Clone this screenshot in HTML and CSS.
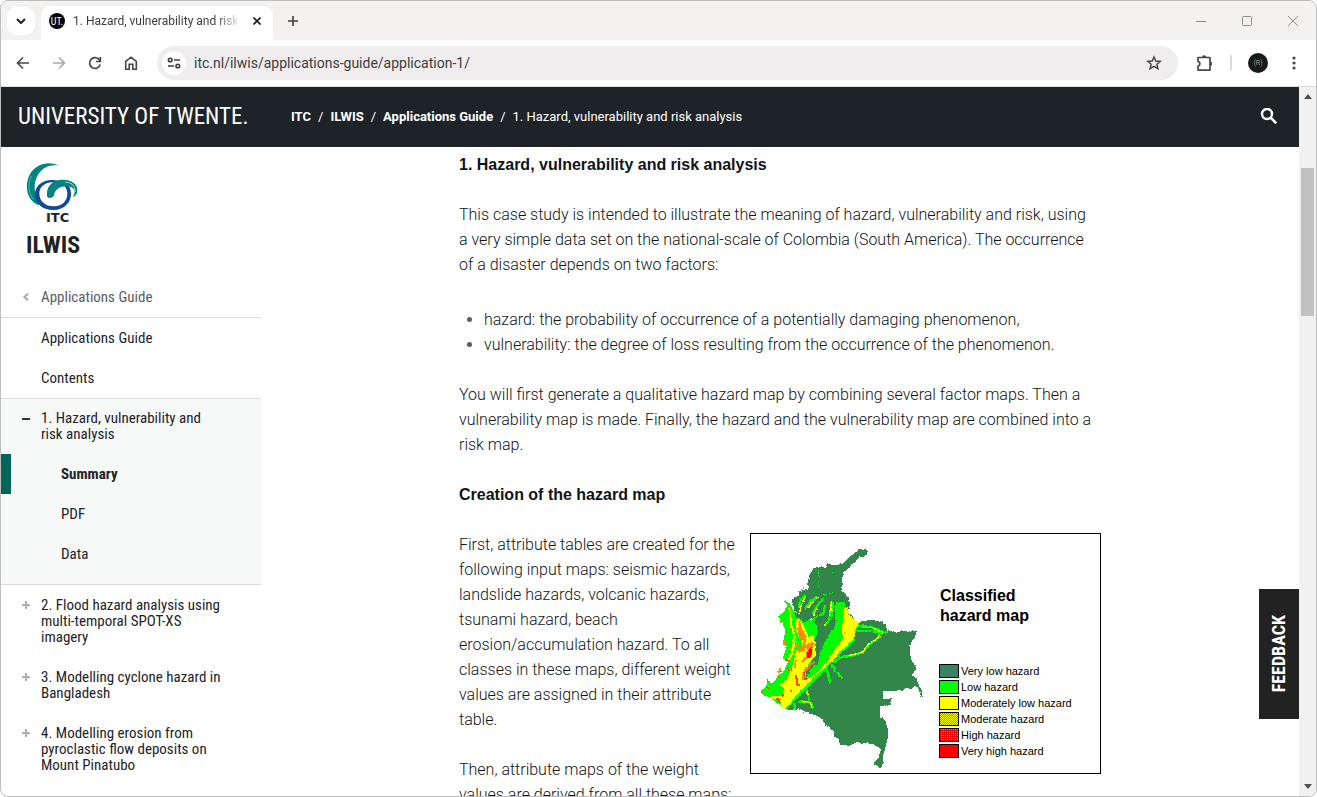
FILE: index.html
```html
<!DOCTYPE html>
<html lang="en">
<head>
<meta charset="utf-8">
<title>1. Hazard, vulnerability and risk analysis</title>
<link rel="stylesheet" href="styles.css">
</head>
<body>
<div class="window">
  <div class="tabstrip">
    <button class="tab-search" aria-label="Search tabs"><svg width="10" height="6" viewBox="0 0 10 6"><path d="M1 1l4 4 4-4" fill="none" stroke="#1f1f1f" stroke-width="2"/></svg></button>
    <div class="tab">
      <span class="favicon">UT.</span>
      <span class="tab-title">1. Hazard, vulnerability and risk</span>
      <button class="plain" aria-label="Close tab"><svg width="8" height="8" viewBox="0 0 8 8"><path d="M.5.5l7 7M7.500.5l-7 7" stroke="#1f1f1f" stroke-width="1.700"/></svg></button>
    </div>
    <button class="plain new-tab" aria-label="New tab"><svg width="10" height="10" viewBox="0 0 10 10"><path d="M5 0v10M0 5h10" stroke="#3c3c3c" stroke-width="1.600"/></svg></button>
    <div class="window-controls">
      <button class="plain" aria-label="Minimize"><svg width="10" height="10" viewBox="0 0 10 10"><path d="M0 5.500h10" stroke="#8c8c8c"/></svg></button>
      <button class="plain" aria-label="Maximize"><svg width="10" height="10" viewBox="0 0 10 10"><rect x=".5" y=".5" width="9" height="9" rx="1" fill="none" stroke="#8c8c8c"/></svg></button>
      <button class="plain" aria-label="Close"><svg width="10" height="10" viewBox="0 0 10 10"><path d="M0 0l10 10M10 0L0 10" stroke="#8c8c8c"/></svg></button>
    </div>
  </div>

  <div class="toolbar">
    <button class="plain nav" aria-label="Back"><svg width="16" height="16" viewBox="0 0 16 16"><path d="M14 8H3M8 2.500L2.500 8 8 13.500" fill="none" stroke="#474747" stroke-width="1.600"/></svg></button>
    <button class="plain nav" aria-label="Forward"><svg width="16" height="16" viewBox="0 0 16 16"><path d="M2 8h11M8 2.500L13.500 8 8 13.500" fill="none" stroke="#a8a8a8" stroke-width="1.600"/></svg></button>
    <button class="plain nav" aria-label="Reload"><svg width="16" height="16" viewBox="0 0 16 16"><path d="M13.200 9.500A5.400 5.400 0 1 1 12.300 4.700L13.300 6" fill="none" stroke="#474747" stroke-width="1.700"/><path d="M13.300 2v4.500H8.800" fill="none" stroke="#474747" stroke-width="1.700"/></svg></button>
    <button class="plain nav" aria-label="Home"><svg width="16" height="16" viewBox="0 0 16 16"><path d="M2.700 6.400L8 2.200l5.300 4.200v7.800h-3.500V9.300H6.200v4.900H2.700z" fill="none" stroke="#474747" stroke-width="1.600"/></svg></button>
    <div class="omnibox">
      <button class="site-info" aria-label="Site information"><svg width="14" height="12" viewBox="0 0 14 12"><g fill="none" stroke="#3c3c3c" stroke-width="1.600"><circle cx="3.200" cy="3" r="1.800"/><path d="M7 3h6M1 9h6"/><circle cx="10.800" cy="9" r="1.800"/></g></svg></button>
      <input class="url" aria-label="Address" value="itc.nl/ilwis/applications-guide/application-1/">
      <button class="plain" aria-label="Bookmark this page"><svg width="16" height="16" viewBox="0 0 16 16"><path d="M8 2l1.800 4 4.400.4-3.300 2.900 1 4.300L8 11.300l-3.900 2.300 1-4.300L1.800 6.400 6.200 6z" fill="none" stroke="#474747" stroke-width="1.500"/></svg></button>
    </div>
    <button class="plain" aria-label="Extensions"><svg width="18" height="18" viewBox="0 0 18 18"><path d="M2 3.500h12v12.600H2v-4a2.400 2.400 0 0 0 0-4.700z" fill="none" stroke="#474747" stroke-width="1.700" stroke-linejoin="round"/><path d="M6 3.500a2.200 2.200 0 0 1 4.400 0zM14 7.500a2.200 2.200 0 0 1 0 4.400z" fill="#474747"/></svg></button>
    <span class="divider"></span>
    <button class="avatar" aria-label="Profile">(R)</button>
    <button class="plain" aria-label="Menu"><svg width="4" height="14" viewBox="0 0 4 14"><g fill="#474747"><circle cx="2" cy="2" r="1.600"/><circle cx="2" cy="7" r="1.600"/><circle cx="2" cy="12" r="1.600"/></g></svg></button>
  </div>

  <div class="viewport">
    <div class="page">
      <header class="site-header">
        <a class="brand" href="#">UNIVERSITY OF TWENTE.</a>
        <nav class="crumbs" aria-label="Breadcrumb">
          <a href="#">ITC</a><i>/</i><a href="#">ILWIS</a><i>/</i><a href="#">Applications Guide</a><i>/</i><span>1. Hazard, vulnerability and risk analysis</span>
        </nav>
        <button class="plain" aria-label="Search"><svg width="18" height="18" viewBox="0 0 18 18"><circle cx="7" cy="6" r="5" fill="none" stroke="#fff" stroke-width="2.400"/><path d="M10.700 9.700l5.600 5.600" stroke="#fff" stroke-width="2.600"/></svg></button>
      </header>

      <div class="columns">
        <aside class="sidebar">
          <a class="logo" href="#">
            <svg width="54" height="48" viewBox="0 3 162 144" aria-hidden="true">
              <path d="M98 14C70-1 31 7 12 39C-7 74 3 119 37 132L47 123C22 105 20 68 37 40C51 18 75 9 98 14z" fill="#008582"/>
              <path d="M16 45C4 75 9 99 23 116" fill="none" stroke="#fff" stroke-width="1"/>
              <path fill="#104a9f" fill-rule="evenodd" d="M79 57C47 57 28 76 27 98C26 126 49 147 82 147C116 146 137 123 135 95C134 72 117 59 79 57zM83 64C111 64 124 79 124 99C123 121 108 136 83 136C57 136 41 120 40 99C39 78 57 63 83 64z"/>
              <path d="M64 108C58 77 80 56 111 56C136 56 155 69 154 87C154 99 148 105 140 109C154 88 141 76 122 76C101 76 86 85 83 106C76 112 69 113 64 108z" fill="#008582"/>
              <path d="M117 63C140 65 148 77 147 93" fill="none" stroke="#fff" stroke-width="2"/>
            </svg>
            <span class="logo-itc">ITC</span>
            <span class="logo-name">ILWIS</span>
          </a>
          <nav class="menu" aria-label="Section">
            <a class="item back" href="#"><svg class="mark" width="8" height="8" viewBox="0 0 8 8"><path d="M6 .8L2.400 4 6 7.200" fill="none" stroke="#a8a8a8" stroke-width="2"/></svg>Applications Guide</a>
            <a class="item" href="#">Applications Guide</a>
            <a class="item" href="#">Contents</a>
            <div class="group">
              <a class="item" href="#"><svg class="mark" width="8" height="8" viewBox="0 0 8 8"><path d="M0 4h8" stroke="#3a3035" stroke-width="2"/></svg>1. Hazard, vulnerability and risk analysis</a>
              <a class="item sub current" href="#">Summary</a>
              <a class="item sub" href="#">PDF</a>
              <a class="item sub" href="#">Data</a>
            </div>
            <a class="item" href="#"><svg class="mark" width="8" height="8" viewBox="0 0 8 8"><path d="M0 4h8M4 0v8" stroke="#b0b0b0" stroke-width="2"/></svg>2. Flood hazard analysis using multi-temporal SPOT-XS imagery</a>
            <a class="item" href="#"><svg class="mark" width="8" height="8" viewBox="0 0 8 8"><path d="M0 4h8M4 0v8" stroke="#b0b0b0" stroke-width="2"/></svg>3. Modelling cyclone hazard in Bangladesh</a>
            <a class="item" href="#"><svg class="mark" width="8" height="8" viewBox="0 0 8 8"><path d="M0 4h8M4 0v8" stroke="#b0b0b0" stroke-width="2"/></svg>4. Modelling erosion from pyroclastic flow deposits on Mount Pinatubo</a>
          </nav>
        </aside>

        <main class="content">
          <h1>1. Hazard, vulnerability and risk analysis</h1>
          <p>This case study is intended to illustrate the meaning of hazard, vulnerability and risk, using a&nbsp;very simple data set on the national-scale of Colombia (South America). The occurrence of&nbsp;a disaster depends on two factors:</p>
          <ul>
            <li>hazard: the probability of occurrence of a potentially damaging phenomenon,</li>
            <li>vulnerability: the degree of loss resulting from the occurrence of the phenomenon.</li>
          </ul>
          <p>You will first generate a qualitative hazard map by combining several factor maps. Then a vulnerability map is made. Finally, the hazard and the vulnerability map are combined into a risk map.</p>
          <h2>Creation of the hazard map</h2>
          <figure class="map">
            <svg width="185" height="239" viewBox="18 27 555 717" role="img" aria-label="Hazard map of Colombia">
              <defs>
                <filter id="rough" x="0" y="0" width="1" height="1">
                  <feTurbulence type="fractalNoise" baseFrequency=".12" numOctaves="2" seed="4"/>
                  <feDisplacementMap in="SourceGraphic" scale="9" xChannelSelector="R" yChannelSelector="G"/>
                </filter>
              </defs>
              <g filter="url(#rough)" shape-rendering="crispEdges" fill="none" stroke-linejoin="round">
                <path fill="#33864a" d="M340 72L360 72 368 80 366 88 356 95 342 96 326 115 310 128 294 148 291 165 292 185 283 196 300 203 310 220 316 235 312 250 308 262 322 272 330 288 345 290 375 286 405 287 420 298 428 315 445 321 480 318 512 317 512 330 500 350 495 370 497 400 514 430 500 450 515 460 520 480 530 495 532 515 527 517 522 495 510 480 500 492 480 488 475 496 440 497 413 498 413 523 438 523 438 540 405 543 405 575 420 585 430 615 430 640 422 660 415 690 411 730 400 725 386 715 400 700 408 672 395 660 370 655 335 652 315 662 285 660 280 640 268 635 265 615 240 602 232 580 210 570 190 565 160 552 150 556 120 552 145 500 220 400 200 280 150 260 140 225 160 210 165 198 190 190 190 165 195 145 210 128 225 125 240 128 248 115 262 120 290 118 305 105 330 82z"/>
                <path fill="#0f0" d="M118 222L136 238 148 262 165 270 190 278 215 300 216 370 240 345 255 318 268 300 272 232 298 232 306 262 330 290 345 292 332 320 330 345 300 375 262 412 225 452 190 487 150 525 125 552 108 545 85 525 50 505 48 495 62 485 68 470 85 476 98 452 118 435 130 408 113 400 124 372 117 345 120 320 112 290 100 275 118 258 126 240z"/>
                <path fill="#33864a" d="M228 310L245 290 262 272 272 285 270 305 254 325 240 350 226 380 220 415 198 430 185 460 178 445 205 400 212 340zM146 262L170 268 192 262 200 280 178 292 152 275z"/>
                <path fill="#ff0" d="M296 245L310 246 310 265 328 285 342 290 332 312 328 338 308 360 285 378 262 408 226 440 196 470 155 510 135 535 120 550 108 550 110 530 90 525 72 518 84 512 112 512 118 490 104 480 125 462 140 430 148 400 155 375 170 370 170 345 158 330 150 290 162 280 178 305 190 335 208 330 210 372 215 390 200 405 182 430 185 460 205 455 250 405 268 375 292 345 292 300z"/>
                <path stroke="#ff0" stroke-width="5" d="M130 242L136 262 138 295 147 325 142 370 130 405 138 395 150 350 140 300M164 260L170 236 182 212M190 250L205 225 220 215M258 232L258 262 250 290 238 302M205 275L215 245 232 222"/>
                <path stroke="#0f0" stroke-width="6" d="M160 250L168 222 182 210M180 250L196 230 218 213M202 264L210 250 235 220M264 230L264 255 254 282 244 300M200 290L214 275 238 265M235 265L240 240M282 250L298 232"/>
                <path stroke="#0f0" stroke-width="3" stroke-dasharray="4 5" d="M222 125L220 155 222 195M235 210L270 202M260 142L270 142 268 135M160 200L178 190 182 198"/>
                <path stroke="#0f0" stroke-width="7" d="M337 303L380 306 410 320 428 320M335 318L375 318 412 322 397 342 370 360 354 382 325 390 290 396 264 412M290 396L275 408M245 432L256 475M258 418L275 440 292 460M186 495L190 520 205 548M160 530L190 532M148 535L148 555"/>
                <path stroke="#ff0" stroke-width="4" d="M350 307L385 308 412 322 398 340 370 358 352 382 310 392M170 528L195 532 202 545M190 510L184 498"/>
                <path fill="#ff8c00" d="M158 280L166 292 172 315 184 335 184 360 205 345 206 360 195 395 176 412 164 412 182 395 186 368 172 380 160 385 160 372 174 362 176 348 164 340 158 325z"/>
                <path stroke="#ff8c00" stroke-width="5" d="M175 465L172 445 188 425 208 410M148 420L155 405 150 430M118 345L116 360M105 290L112 292M298 322L304 324M108 430L100 445M158 355L154 370"/>
                <path stroke="#c86438" stroke-width="5" d="M182 464L177 448 195 425 210 412"/>
                <path fill="#ff4600" d="M150 448L156 452 162 485 154 480zM90 525L96 518 107 522 107 535 98 530zM111 506L116 508 115 520 110 518zM135 494L144 498 138 502zM178 458L188 460 184 466 177 464z"/>
                <path stroke="#ff4600" stroke-width="4" d="M60 485L72 490M50 500L53 506M128 428L133 438M104 440L112 438M100 455L106 458M120 405L132 408M66 466L70 472"/>
                <path fill="red" d="M192 372L202 366 202 382 196 398 186 398 186 386z"/>
              </g>
            </svg>
            <figcaption>
              <strong>Classified<br>hazard map</strong>
              <ul class="legend">
                <li><span class="swatch very-low"></span>Very low hazard</li>
                <li><span class="swatch low"></span>Low hazard</li>
                <li><span class="swatch mod-low"></span>Moderately low hazard</li>
                <li><span class="swatch moderate"></span>Moderate hazard</li>
                <li><span class="swatch high"></span>High hazard</li>
                <li><span class="swatch very-high"></span>Very high hazard</li>
              </ul>
            </figcaption>
          </figure>
          <p>First, attribute tables are created for the following input maps: seismic hazards, landslide hazards, volcanic hazards, tsunami hazard, beach erosion/accumulation hazard. To all classes in these maps, different weight values are assigned in their attribute table.</p>
          <p>Then, attribute maps of the weight values are derived from all these maps:</p>
        </main>
      </div>
      <button class="feedback">FEEDBACK</button>
    </div>
    <div class="scrollbar" aria-hidden="true">
      <svg width="8" height="5" viewBox="0 0 8 5"><path d="M0 5l4-5 4 5z" fill="#505050"/></svg>
      <span class="track"><span class="thumb"></span></span>
      <svg width="8" height="5" viewBox="0 0 8 5"><path d="M0 0l4 5 4-5z" fill="#505050"/></svg>
    </div>
  </div>
</div>
</body>
</html>
```
FILE: styles.css
```css
* { box-sizing: border-box; }
body { margin: 0; background: #fff; font-family: Roboto, "Liberation Sans", Arial, sans-serif; color: #1e2328; }
a { color: inherit; text-decoration: none; }
button { font: inherit; }
svg { display: block; flex: none; }
ul, h1, h2, p, figure { margin: 0; padding: 0; }

.window {
  display: flex; flex-direction: column; height: 100vh; overflow: hidden;
  border: 1px solid #bdbdbd; border-radius: 8px; background: #fff;
}
.plain { display: flex; align-items: center; justify-content: center; padding: 0; border: 0; background: none; }

.tabstrip { display: flex; flex: none; align-items: center; height: 39px; padding: 0 18px 0 6px; background: #f3f2f0; }
.tab-search {
  display: flex; align-items: center; justify-content: center; width: 28px; height: 28px;
  padding: 0; border: 0; border-radius: 10px; background: #fff;
}
.tab {
  display: flex; align-items: center; align-self: flex-end; gap: 8px;
  width: 232px; height: 34px; margin-left: 6px; padding: 0 12px 4px 8px;
  border-radius: 10px 10px 0 0; background: #fff;
}
.favicon {
  display: flex; flex: none; align-items: center; justify-content: center; width: 16px; height: 16px;
  border-radius: 50%; background: #000; color: #fff; font: 10px "Roboto Condensed", sans-serif;
}
.tab-title {
  flex: 1; white-space: nowrap; font-size: 12px; line-height: 16px; color: #3c3c3c;
  -webkit-mask-image: linear-gradient(to right, #000 85%, transparent);
  mask-image: linear-gradient(to right, #000 85%, transparent);
}
.tab .plain { margin-left: 4px; }
.new-tab { margin-left: 15px; }
.window-controls { display: flex; gap: 36px; margin-left: auto; }

.toolbar {
  display: flex; flex: none; align-items: center; height: 47px; padding: 0 20px 0 14px;
  border-bottom: 1px solid #dcdcdc; background: #fff;
}
.nav { margin-right: 20px; }
.omnibox {
  display: flex; flex: 1; align-items: center; height: 34px; margin: 0 18px 0 -2px; padding: 0 16px 0 5px;
  border-radius: 17px; background: #efedee;
}
.site-info {
  display: flex; align-items: center; justify-content: center; width: 24px; height: 24px;
  padding: 0; border: 0; border-radius: 50%; background: #fff;
}
.url { flex: 1; min-width: 0; margin-left: 8px; padding: 0; border: 0; background: none; font-family: inherit; font-size: 14px; line-height: 20px; color: #3c3c3c; }
.divider { width: 2px; height: 16px; margin: 0 16px; background: #dcdcdc; }
.avatar {
  width: 20px; height: 20px; margin-right: 24px; padding: 0; border: 0; border-radius: 50%;
  background: #1a1a1a; color: #999; font-size: 7px;
}

.viewport { display: flex; flex: 1; min-height: 0; }
.page { position: relative; flex: 1; min-width: 0; overflow: hidden; }
.site-header { display: flex; align-items: center; height: 60px; padding: 0 21px 0 17px; background: #1e2328; color: #fff; }
.brand { width: 273px; font: 23px/30px "Roboto Condensed", "Liberation Sans", sans-serif; white-space: nowrap; }
.crumbs { flex: 1; font-size: 13px; line-height: 20px; }
.crumbs a { font-weight: bold; }
.crumbs i { padding: 0 7px; font-style: normal; }

.columns { display: grid; grid-template-columns: 260px minmax(0, 1fr); }
.sidebar { font-family: "Roboto Condensed", "Liberation Sans", sans-serif; }
.logo { display: flex; flex-direction: column; align-items: flex-start; padding: 15px 25px 13px; }
.logo-itc { padding-left: 20px; font: bold 13px/16px "DejaVu Sans", sans-serif; }
.logo-name { font-size: 24px; line-height: 38px; font-weight: bold; }
.item { position: relative; display: block; padding: 12px 40px; font-size: 15px; line-height: 16px; }
.back { border-bottom: 1px solid #dcdcdc; color: #5a5d60; }
.mark { position: absolute; left: 21px; top: 16px; }
.group { padding-bottom: 10px; border: solid #dcdcdc; border-width: 1px 0; background: #f7f8f8; }
.group .item:first-child { padding-top: 11px; }
.sub { padding-left: 60px; }
.current { border-left: 10px solid #00675a; padding-left: 50px; font-weight: bold; }

.content { width: 642px; max-width: 100%; margin-left: 198px; padding-top: 5px; font-size: 16px; font-weight: 300; line-height: 25px; color: #101418; }
.content h1, .content h2 { margin-bottom: 25px; font: bold 16px/25px "Liberation Sans", Arial, sans-serif; }
.content p { margin-bottom: 25px; }
.content > ul { margin: 30px 0 25px; padding-left: 25px; }
.content > ul li::marker { color: #5a5d60; }

.map {
  float: right; display: flex; width: 351px; margin: 1px 0 25px 12px; border: 1px solid #000;
  background: #fff; color: #000; font-family: "Liberation Sans", Arial, sans-serif; font-weight: 400;
}
figcaption { flex: 1; padding: 52px 0 0 3px; }
figcaption strong { display: block; padding-left: 1px; font-size: 16px; line-height: 20px; }
.legend { margin-top: 37px; list-style: none; font-size: 11px; line-height: 16px; white-space: nowrap; }
.legend li { display: flex; align-items: center; gap: 2px; }
.swatch { width: 20px; height: 14px; border: 1px solid #000; }
.very-low { background: repeating-conic-gradient(#33864a 0 25%, #3d8080 0 50%) 0 0 / 4px 4px; }
.low { background: #0f0; }
.mod-low { background: #ff0; }
.moderate { background: repeating-conic-gradient(#ff0 0 25%, #ff5a00 0 50%) 0 0 / 2px 2px; }
.high { background: conic-gradient(#ff8c00 25%, red 0) 0 0 / 2px 2px; }
.very-high { background: red; }

.feedback {
  position: absolute; right: 0; bottom: 77px; width: 40px; height: 130px; padding: 0; border: 0;
  background: #222; color: #fff; font: bold 18px/40px "Roboto Condensed", "Liberation Sans", sans-serif;
  writing-mode: sideways-lr;
}

.scrollbar { display: flex; flex: none; flex-direction: column; align-items: center; width: 17px; padding: 7px 0; background: #f0f0f0; }
.track { flex: 1; }
.thumb { display: block; width: 13px; height: 148px; margin-top: 69px; background: #c1c1c1; }
```
